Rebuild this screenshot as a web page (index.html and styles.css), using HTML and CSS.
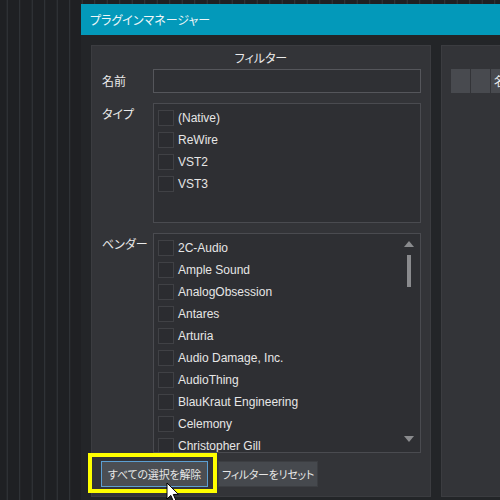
FILE: index.html
```html
<!DOCTYPE html>
<html lang="ja">
<head>
<meta charset="utf-8">
<title>プラグインマネージャー</title>
<link rel="stylesheet" href="styles.css">
</head>
<body>
<div class="window">
  <div class="titlebar">プラグインマネージャー</div>
  <div class="content">
    <section class="panel filter">
      <div class="panel-title">フィルター</div>
      <div class="form">
        <div class="label label-mid">名前</div>
        <div class="input"></div>
        <div class="label">タイプ</div>
        <div class="list list-type">
          <div class="items">
            <div class="item"><span class="check"></span>(Native)</div>
            <div class="item"><span class="check"></span>ReWire</div>
            <div class="item"><span class="check"></span>VST2</div>
            <div class="item"><span class="check"></span>VST3</div>
          </div>
        </div>
        <div class="label">ベンダー</div>
        <div class="list list-vendor">
          <div class="items">
            <div class="item"><span class="check"></span>2C-Audio</div>
            <div class="item"><span class="check"></span>Ample Sound</div>
            <div class="item"><span class="check"></span>AnalogObsession</div>
            <div class="item"><span class="check"></span>Antares</div>
            <div class="item"><span class="check"></span>Arturia</div>
            <div class="item"><span class="check"></span>Audio Damage, Inc.</div>
            <div class="item"><span class="check"></span>AudioThing</div>
            <div class="item"><span class="check"></span>BlauKraut Engineering</div>
            <div class="item"><span class="check"></span>Celemony</div>
            <div class="item"><span class="check"></span>Christopher Gill</div>
            <div class="item"><span class="check"></span>Cytomic</div>
          </div>
          <div class="scrollbar">
            <span class="arrow-up"></span>
            <span class="thumb"></span>
            <span class="spacer"></span>
            <span class="arrow-down"></span>
          </div>
        </div>
      </div>
      <div class="buttons">
        <button class="btn btn-focus">すべての選択を解除</button>
        <button class="btn btn-reset">フィルターをリセット</button>
      </div>
    </section>
    <section class="panel results">
      <div class="header-row">
        <div class="hcell"></div>
        <div class="hcell"></div>
        <div class="hcell hcell-name">名前</div>
      </div>
    </section>
  </div>
  <div class="highlight"></div>
  <svg class="cursor" width="14" height="22" viewBox="0 0 14 22">
    <path d="M1 1 L1 17 L4.8 13.4 L7.6 19.6 L10 18.5 L7.3 12.5 L12.4 12.3 Z" fill="#fff" stroke="#000" stroke-width="1" stroke-linejoin="round"/>
  </svg>
</div>
</body>
</html>
```

FILE: styles.css
```css
* { box-sizing: border-box; }

html, body {
  margin: 0;
  padding: 0;
  height: 500px;
  overflow: hidden;
}

body {
  background-color: #1f2023;
  background-image: linear-gradient(to right, transparent 7px, #34373b 7px, #34373b 8px, transparent 8px);
  background-size: 12.5px 100%;
  font-family: "Liberation Sans", "Noto Sans CJK JP", sans-serif;
  font-size: 12px;
  color: #e4e4e4;
}

.window {
  position: relative;
  margin: 4px 0 0 81px;
  height: 496px;
  background: #232528;
  display: flex;
  flex-direction: column;
}

.titlebar {
  height: 31px;
  flex: none;
  background: #0399ba;
  color: #eef6f8;
  font-family: "Noto Sans CJK JP", sans-serif;
  font-feature-settings: "palt";
  font-size: 12px;
  line-height: 31px;
  padding-left: 9px;
}

.content {
  flex: 1;
  display: flex;
  gap: 10px;
  padding: 10px 0 3px 10px;
  min-height: 0;
}

.panel {
  background: #333438;
  border: 1px solid #3b3c40;
}

.filter {
  width: 340px;
  flex: none;
  padding: 0 10px 0 10px;
  display: flex;
  flex-direction: column;
}

.panel-title {
  height: 23px;
  line-height: 23px;
  text-align: center;
  font-family: "Noto Sans CJK JP", sans-serif;
  font-feature-settings: "palt";
  font-size: 12px;
  color: #eaeaea;
}

.form {
  display: grid;
  grid-template-columns: 51px 268px;
  row-gap: 10px;
}

.label {
  font-family: "Noto Sans CJK JP", sans-serif;
  font-feature-settings: "palt";
  font-size: 12px;
  line-height: 18px;
  color: #eaeaea;
  padding-top: 2px;
}

.label-mid {
  align-self: center;
  padding-top: 0;
}

.input {
  height: 24px;
  border: 1px solid #55565b;
  background: #2f3034;
}

.list {
  border: 1px solid #4a4b50;
  background: #2e2f33;
  overflow: hidden;
  display: flex;
}

.list-type { height: 120px; }
.list-vendor { height: 220px; }

.items {
  flex: 1;
  padding: 3px 0 0 4px;
}

.item {
  height: 22px;
  display: flex;
  align-items: center;
  gap: 4px;
  white-space: nowrap;
  color: #e6e6e6;
}

.check {
  width: 16px;
  height: 16px;
  flex: none;
  border: 1px solid #404145;
  background: #2b2c30;
}

.scrollbar {
  width: 22px;
  flex: none;
  display: flex;
  flex-direction: column;
  align-items: center;
  padding: 7px 0 10px;
}

.arrow-up {
  width: 0;
  height: 0;
  border-left: 5px solid transparent;
  border-right: 5px solid transparent;
  border-bottom: 6px solid #8a8b8e;
}

.arrow-down {
  width: 0;
  height: 0;
  border-left: 5px solid transparent;
  border-right: 5px solid transparent;
  border-top: 6px solid #8a8b8e;
}

.thumb {
  width: 4px;
  height: 32px;
  margin-top: 8px;
  background: #8a8b8e;
}

.spacer { flex: 1; }

.buttons {
  display: flex;
  gap: 10px;
  margin: 8px 0 0 -1px;
}

.btn {
  height: 26px;
  padding: 0;
  border: 1px solid #3c3e42;
  background: #46494e;
  color: #e6e6e6;
  font-family: "Noto Sans CJK JP", sans-serif;
  font-feature-settings: "palt";
  font-size: 11px;
  line-height: 24px;
  white-space: nowrap;
  text-align: center;
}

.btn-focus {
  width: 107px;
  border-color: #5c9fd2;
  background: #4b4e53;
  letter-spacing: -0.2px;
}

.btn-reset {
  width: 100px;
  letter-spacing: -0.3px;
}

.results {
  flex: 1;
  border-right: none;
  padding: 23px 0 0 9px;
  overflow: hidden;
}

.header-row {
  display: flex;
  gap: 1px;
  height: 24px;
}

.hcell {
  width: 19px;
  flex: none;
  background: #484a4f;
}

.hcell-name {
  width: 80px;
  padding-left: 3px;
  line-height: 24px;
  font-family: "Noto Sans CJK JP", sans-serif;
  color: #eaeaea;
  white-space: nowrap;
}

.highlight {
  position: absolute;
  left: 7px;
  top: 449px;
  width: 129px;
  height: 40px;
  border: 4px solid #ffff00;
}

.cursor {
  position: absolute;
  left: 85px;
  top: 478px;
}
```
